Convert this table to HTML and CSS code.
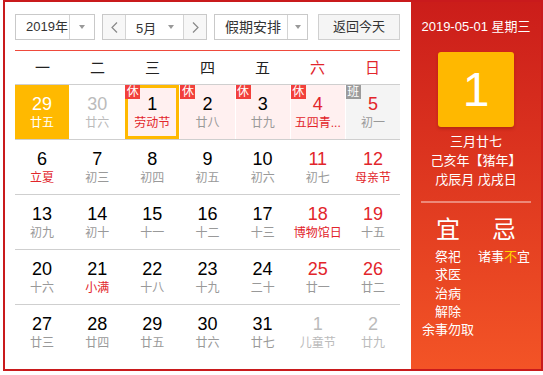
FILE: index.html
```html
<!DOCTYPE html>
<html lang="zh">
<head>
<meta charset="utf-8">
<link rel="stylesheet" href="styles.css">
</head>
<body>
<div class="cal">
  <div class="main">
    <div class="toolbar">
      <div class="sel sel-year"><span class="sel-text">2019年</span><span class="sel-arrow"><span class="caret"></span></span></div>
      <div class="month">
        <span class="nav"><svg width="7" height="11" viewBox="0 0 7 11"><polyline points="6,0.5 1,5.5 6,10.5" fill="none" stroke="#888" stroke-width="1.2"/></svg></span>
        <span class="month-mid"><span class="month-text">5月</span><span class="caret"></span></span>
        <span class="nav"><svg width="7" height="11" viewBox="0 0 7 11"><polyline points="1,0.5 6,5.5 1,10.5" fill="none" stroke="#888" stroke-width="1.2"/></svg></span>
      </div>
      <div class="sel sel-hol"><span class="sel-text">假期安排</span><span class="sel-arrow"><span class="caret"></span></span></div>
      <span class="today">返回今天</span>
    </div>
    <div class="week">
      <span>一</span><span>二</span><span>三</span><span>四</span><span>五</span><span class="red">六</span><span class="red">日</span>
    </div>
    <div class="rows">
      <div class="row">
        <div class="cell other today-cell"><span class="num">29</span><span class="lunar">廿五</span></div>
        <div class="cell other"><span class="num">30</span><span class="lunar">廿六</span></div>
        <div class="cell rest selected"><span class="badge">休</span><span class="num">1</span><span class="lunar fest">劳动节</span></div>
        <div class="cell rest"><span class="badge">休</span><span class="num">2</span><span class="lunar">廿八</span></div>
        <div class="cell rest"><span class="badge">休</span><span class="num">3</span><span class="lunar">廿九</span></div>
        <div class="cell rest weekend"><span class="badge">休</span><span class="num">4</span><span class="lunar fest">五四青...</span></div>
        <div class="cell work weekend"><span class="badge gray">班</span><span class="num">5</span><span class="lunar">初一</span></div>
      </div>
      <div class="row">
        <div class="cell"><span class="num">6</span><span class="lunar fest">立夏</span></div>
        <div class="cell"><span class="num">7</span><span class="lunar">初三</span></div>
        <div class="cell"><span class="num">8</span><span class="lunar">初四</span></div>
        <div class="cell"><span class="num">9</span><span class="lunar">初五</span></div>
        <div class="cell"><span class="num">10</span><span class="lunar">初六</span></div>
        <div class="cell weekend"><span class="num">11</span><span class="lunar">初七</span></div>
        <div class="cell weekend"><span class="num">12</span><span class="lunar fest">母亲节</span></div>
      </div>
      <div class="row">
        <div class="cell"><span class="num">13</span><span class="lunar">初九</span></div>
        <div class="cell"><span class="num">14</span><span class="lunar">初十</span></div>
        <div class="cell"><span class="num">15</span><span class="lunar">十一</span></div>
        <div class="cell"><span class="num">16</span><span class="lunar">十二</span></div>
        <div class="cell"><span class="num">17</span><span class="lunar">十三</span></div>
        <div class="cell weekend"><span class="num">18</span><span class="lunar fest">博物馆日</span></div>
        <div class="cell weekend"><span class="num">19</span><span class="lunar">十五</span></div>
      </div>
      <div class="row">
        <div class="cell"><span class="num">20</span><span class="lunar">十六</span></div>
        <div class="cell"><span class="num">21</span><span class="lunar fest">小满</span></div>
        <div class="cell"><span class="num">22</span><span class="lunar">十八</span></div>
        <div class="cell"><span class="num">23</span><span class="lunar">十九</span></div>
        <div class="cell"><span class="num">24</span><span class="lunar">二十</span></div>
        <div class="cell weekend"><span class="num">25</span><span class="lunar">廿一</span></div>
        <div class="cell weekend"><span class="num">26</span><span class="lunar">廿二</span></div>
      </div>
      <div class="row">
        <div class="cell"><span class="num">27</span><span class="lunar">廿三</span></div>
        <div class="cell"><span class="num">28</span><span class="lunar">廿四</span></div>
        <div class="cell"><span class="num">29</span><span class="lunar">廿五</span></div>
        <div class="cell"><span class="num">30</span><span class="lunar">廿六</span></div>
        <div class="cell"><span class="num">31</span><span class="lunar">廿七</span></div>
        <div class="cell other"><span class="num">1</span><span class="lunar">儿童节</span></div>
        <div class="cell other"><span class="num">2</span><span class="lunar">廿九</span></div>
      </div>
    </div>
  </div>
  <div class="side">
    <div class="side-date">2019-05-01 星期三</div>
    <div class="big-day">1</div>
    <div class="side-lunar">
      <div>三月廿七</div>
      <div>己亥年【猪年】</div>
      <div>戊辰月 戊戌日</div>
    </div>
    <div class="side-sep"></div>
    <div class="yiji">
      <div class="col">
        <div class="yj-title">宜</div>
        <div class="yj-item">祭祀</div>
        <div class="yj-item">求医</div>
        <div class="yj-item">治病</div>
        <div class="yj-item">解除</div>
        <div class="yj-item">余事勿取</div>
      </div>
      <div class="col">
        <div class="yj-title">忌</div>
        <div class="yj-item">诸事<span class="yellow">不</span>宜</div>
      </div>
    </div>
  </div>
</div>
</body>
</html>
```

FILE: styles.css
```css
* { box-sizing: border-box; }
html, body { margin: 0; padding: 0; background: #fff; }
body {
  font-family: "Liberation Sans", "Noto Sans CJK SC", sans-serif;
  color: #333;
}
.cal {
  display: flex;
  margin-left: 3px;
  width: 540px;
  height: 371px;
  border: 2px solid #c91a1c;
}
.main {
  width: 406px;
  padding: 12px 11px 0 10px;
  background: #fff;
}
.toolbar {
  display: flex;
  height: 26px;
  font-size: 13px;
}
.sel {
  display: flex;
  height: 26px;
  border: 1px solid #c9c9c9;
  background: #fff;
}
.sel-text { flex: 1; padding-left: 10px; line-height: 24px; color: #333; }
.sel-arrow {
  width: 25px;
  border-left: 1px solid #d4d4d4;
  display: flex;
  align-items: center;
  justify-content: center;
}
.caret {
  width: 0; height: 0;
  border-left: 3.5px solid transparent;
  border-right: 3.5px solid transparent;
  border-top: 4px solid #999;
}
.sel-year { width: 80px; }
.month {
  display: flex;
  margin-left: 7px;
  width: 105px;
  height: 26px;
  border: 1px solid #c9c9c9;
}
.nav {
  width: 22px;
  display: flex;
  align-items: center;
  justify-content: center;
  background: #f7f7f7;
}
.month-mid {
  flex: 1;
  display: flex;
  align-items: center;
  border-left: 1px solid #d4d4d4;
  border-right: 1px solid #d4d4d4;
  padding-left: 10px;
  padding-right: 9px;
}
.month-text { flex: 1; }
.sel-hol { margin-left: 7px; width: 94px; }
.sel-hol .sel-text { padding-left: 10px; font-size: 14px; }
.sel-hol .sel-arrow { width: 20px; }
.today {
  margin-left: 10px;
  width: 82px;
  height: 26px;
  border: 1px solid #d0d0d0;
  background: #f5f5f5;
  text-align: center;
  line-height: 24px;
  color: #333;
}
.week {
  margin-top: 10px;
  border-top: 1px solid #ef4a3c;
  display: grid;
  grid-template-columns: repeat(7, 1fr);
  height: 34px;
  line-height: 33px;
  font-size: 15px;
  text-align: center;
  color: #222;
}
.week .red { color: #e2252b; }
.row {
  border-top: 1px solid #cfcfcf;
  display: grid;
  grid-template-columns: repeat(7, 1fr);
  column-gap: 1px;
  height: 55px;
}
.cell {
  position: relative;
  display: flex;
  flex-direction: column;
  align-items: center;
  padding-top: 8px;
  height: 54px;
}
.num { font-size: 18px; line-height: 22px; color: #000; }
.lunar { font-size: 12px; line-height: 17px; color: #999; white-space: nowrap; }
.weekend .num { color: #e2252b; }
.fest { color: #e2252b; }
.other .num, .other .lunar { color: #bbb; }
.today-cell { background: #ffb900; }
.today-cell .num, .today-cell .lunar { color: #fff; }
.rest { background: #fff0f0; }
.work { background: #f4f4f4; }
.selected { box-shadow: inset 0 0 0 3px #ffb900; }
.badge {
  position: absolute;
  left: 0; top: 0;
  width: 15px; height: 14px;
  background: #f2403b;
  color: #fff;
  font-size: 12px;
  line-height: 14px;
  text-align: center;
}
.badge.gray { background: #9b9b9b; }
.side {
  width: 130px;
  background: linear-gradient(#cb1d1a, #f35426);
  color: #fff;
  padding: 15px 9px 0 9px;
  display: flex;
  flex-direction: column;
  align-items: center;
  font-size: 13px;
}
.side-date { line-height: 20px; white-space: nowrap; }
.big-day {
  margin-top: 15px;
  width: 76px;
  height: 75px;
  border-radius: 3px;
  background: #ffb800;
  box-shadow: 0 2px 3px rgba(120, 20, 0, 0.35);
  font-size: 48px;
  line-height: 75px;
  text-align: center;
  color: #fff;
}
.side-lunar { margin-top: 5px; line-height: 19px; text-align: center; white-space: nowrap; }
.side-sep {
  margin-top: 12px;
  width: 110px;
  height: 2px;
  background: rgba(255, 255, 255, 0.4);
}
.yiji {
  margin-top: 12px;
  display: grid;
  grid-template-columns: 56px 56px;
  width: 112px;
}
.col { display: flex; flex-direction: column; align-items: center; }
.yj-title { font-size: 24px; line-height: 30px; margin-bottom: 3px; }
.yj-item { line-height: 18.3px; white-space: nowrap; }
.yellow { color: #ffd500; }
```
